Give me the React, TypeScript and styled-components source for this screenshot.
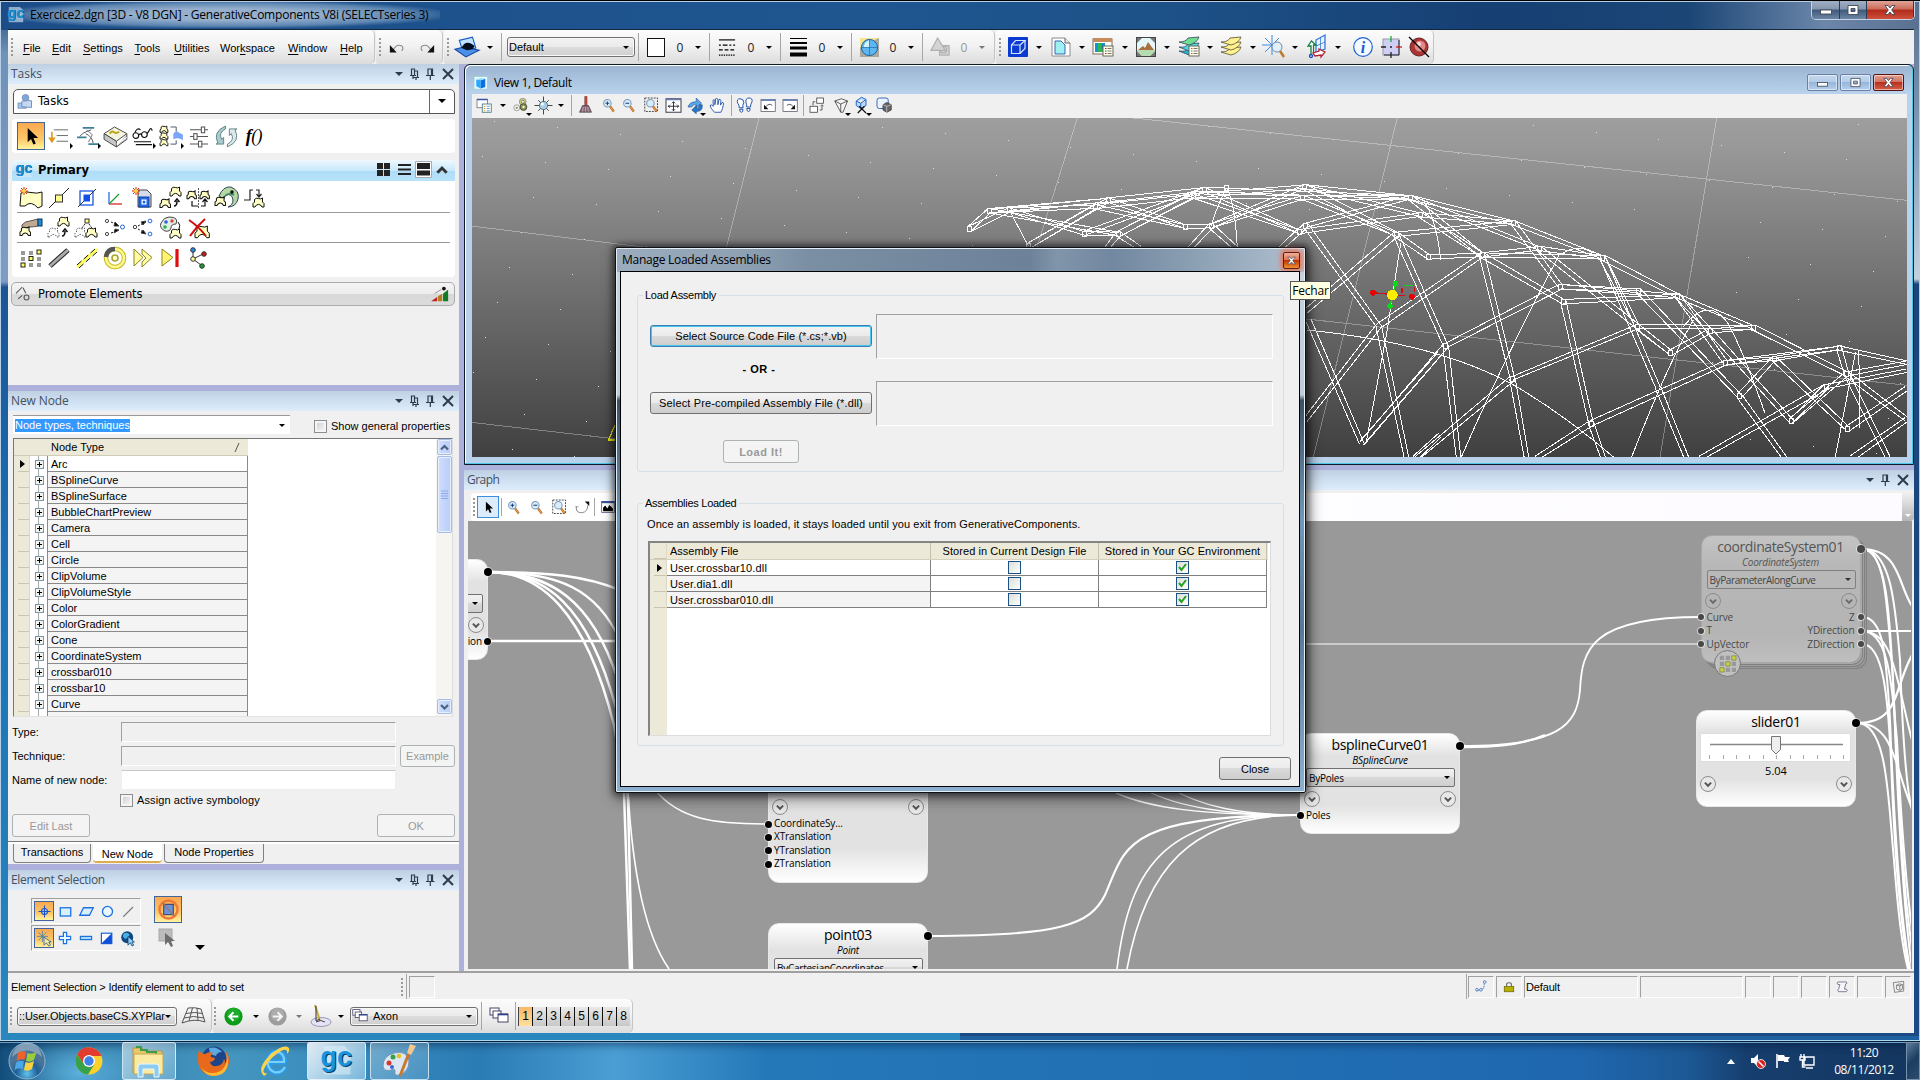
import React from "react";
import styled, { createGlobalStyle, css } from "styled-components";

const Global = createGlobalStyle`
  *{box-sizing:border-box}
  html,body{margin:0;padding:0;overflow:hidden;background:#1b4b84}
  body{font:11px "Liberation Sans",Arial,sans-serif;color:#000}
`;
const UI = `"Liberation Sans",Arial,sans-serif`;
const SEG = `"Open Sans","Noto Sans",sans-serif`;
const VER = `"DejaVu Sans",Verdana,sans-serif`;

/* ---------- icon drawings, each on a 20 x 20 grid ---------- */
const leaf = (x: number, y: number, s = 1, dash = false) => (
  <path
    transform={`translate(${x} ${y}) scale(${s})`}
    d="M0 9V5.500L1.500 4V1.500Q3-.5 5.500 .5Q7.500 1.500 9.500 0V4L11 5.500V9H9L7.500 7Q5.500 5.800 3.500 7L2 9Z"
    fill={dash ? "none" : "#ffffc4"}
    stroke={dash ? "#555" : "#111"}
    strokeWidth={1 / s}
    strokeDasharray={dash ? "1.5 1.2" : undefined}
  />
);
const star = (x: number, y: number) => (
  <g>
    <path d={`M${x - 4} ${y}h8M${x} ${y - 4}v8M${x - 3} ${y - 3}l6 6M${x + 3} ${y - 3}l-6 6`} stroke="#e02000" />
    <circle cx={x} cy={y} r="2" fill="#ffd040" />
  </g>
);
const lens = (sign: string) => (
  <g>
    <path d="M12 11l5 7" stroke="#b86a20" strokeWidth="3" />
    <path d="M12.500 11.500l4 6" stroke="#f3b15c" strokeWidth="1.200" />
    <circle cx="8.500" cy="7" r="5" fill="#d8ecfa" stroke="#7c9ab8" strokeWidth="1.400" />
    <path d={sign} stroke="#1c3c78" strokeWidth="1.400" />
  </g>
);
const sheet = (x: number, y: number) => (
  <g>
    <rect x={x} y={y} width="10" height="10" fill="#fffde8" stroke="#5c5c50" strokeWidth=".9" />
    <path d={`M${x + 4.5} ${y + 2.5}h4M${x + 4.5} ${y + 5}h4M${x + 4.5} ${y + 7.5}h4`} stroke="#555" strokeWidth=".8" />
    <path d={`M${x + 2} ${y + 2.5}h1.5M${x + 2} ${y + 7.5}h1.5`} stroke="#d02020" />
    <path d={`M${x + 2} ${y + 5}h1.5`} stroke="#2050d0" />
  </g>
);
const cascade = (
  <g fill="#fff" stroke="#446">
    <rect x="1" y="2" width="9" height="7" /><rect x="4" y="5" width="8" height="7" /><rect x="9" y="8" width="10" height="8" />
    <path d="M9 8.500h10" stroke="#2a3c8c" strokeWidth="1.600" />
  </g>
);
const ICONS: Record<string, React.ReactNode> = {
  gc: (
    <g fontFamily={UI} fontWeight="700">
      <path d="M1 0h14l4 4v15H1z" fill="#d7ecf8" opacity=".6" />
      <text x="-.4" y="14.200" fontSize="18" fill="#083c6e" textLength="21" lengthAdjust="spacingAndGlyphs">gc</text>
      <text x="-1" y="13.300" fontSize="18" fill="#1893dd" textLength="21" lengthAdjust="spacingAndGlyphs">gc</text>
    </g>
  ),
  undo: <g><path d="M5 13Q9 5.500 14.500 8Q18 10 15 14" stroke="#888" fill="none" strokeWidth="1.300" /><path d="M1 7v9h8z" fill="#111" /></g>,
  redo: <g><path d="M15 13Q11 5.500 5.500 8Q2 10 5 14" stroke="#888" fill="none" strokeWidth="1.300" /><path d="M19 7v9h-8z" fill="#111" /></g>,
  laptop: (
    <g><path d="M3 4L15 1L18 11L6 13Z" fill="#bfe3ff" stroke="#1a5cc8" /><path d="M-1 12L7 10L21 13L9 19Z" fill="#4a90e8" stroke="#1546a0" /><path d="M5 11Q8 4 14 7L17 9L15 12L10 13Z" fill="#041020" /></g>
  ),
  styles: <g stroke="#000" strokeWidth="1.200"><path d="M1 2h17" /><path d="M1 7.500h17" strokeDasharray="2 2 5 2" /><path d="M1 12.500h17" strokeDasharray="4 2" /><path d="M1 18h17" strokeDasharray="1.500 1" /></g>,
  globe: (
    <g><rect width="20" height="20" fill="#f6e490" /><path d="M0 10V20H20V0Z" fill="#a9a9a0" /><circle cx="10" cy="10" r="8.500" fill="#5db8f2" stroke="#1c5c9c" /><path d="M10 2Q4 4 4 10H10Z" fill="#d4f0ff" /><path d="M10 1.500v17M1.500 10h17" stroke="#2a6cb0" strokeWidth=".8" /></g>
  ),
  tri: <g fill="#d4d4d4" stroke="#b0b0b0" strokeWidth="1.300"><rect x="9" y="8" width="10" height="10" /><circle cx="13" cy="12" r="3.500" /><path d="M7 0l8 13H0z" /></g>,
  model: <g><rect width="20" height="20" rx="1" fill="#0b3ad2" /><path d="M3.500 8h8.500v8.500h-8.500zM3.500 8l4-4.500h9.500l-5 4.500M17 3.500v8l-5 5" fill="none" stroke="#d4e4ff" strokeWidth="1.200" /></g>,
  refs: <g><path d="M1 1h13l5 5v13H1z" fill="#fff" stroke="#8c8c8c" /><path d="M4 4h6l4 4v9H4z" fill="#9ff0f0" stroke="#3c64b0" /><path d="M14 1v5h5" fill="#e8e8e8" stroke="#666" /></g>,
  raster: <g><rect x="0" y="2" width="19" height="15" fill="#fff" stroke="#806c5c" /><path d="M0 1h19v4H0z" fill="#c88c5c" /><rect x="2" y="6" width="10" height="9" fill="#1690d8" /><path d="M5 6h3v6h4v3H5z" fill="#30b850" />{sheet(10, 9)}</g>,
  image: <g><rect x=".5" y=".5" width="19" height="19" fill="#777" stroke="#444" /><path d="M6 1h8l5 5v8l-5 5H6l-5-5V6z" fill="#e4f8fa" /><path d="M1 13h18v1l-5 5H6l-5-5z" fill="#b4dcb0" /><path d="M2 13l5-4 2 2 3-6 6 8z" fill="#a8703c" /></g>,
  layersg: <g stroke="#345" strokeWidth=".8"><path d="M0 14q7 1 9-2l11-1q-2 5-10 7z" fill="#20b8d8" /><path d="M0 10q7 1 9-3l11-1q-2 6-10 8z" fill="#50d8e8" /><path d="M0 5q7 0 9-4l11-1q-2 6-10 8z" fill="#70e090" />{sheet(10, 9)}</g>,
  layersy: <g stroke="#55502c" strokeWidth=".8" fill="#fff090"><path d="M0 15q7 0 9-4l11-1q-2 6-10 8z" /><path d="M0 10q7 0 9-4l11-1q-2 6-10 8z" /><path d="M0 5q7 0 9-4l11-1q-2 6-10 8z" /></g>,
  accusnap: <g><path d="M8-2v20M-2 8h20M1 1l13 13M15 1L1 15" stroke="#3c8ce8" strokeWidth="1" /><path d="M16 14l4 6" stroke="#c07828" strokeWidth="2.500" /><circle cx="13" cy="10" r="5" fill="#e0f0fc" stroke="#788ca0" /></g>,
  acs: <g fill="none" strokeWidth="1.300"><path d="M9 3L18-2V12L9 15Z" stroke="#3878d8" fill="#eaf4ff" /><path d="M13.500 1v12M9 9l9-4" stroke="#3878d8" strokeWidth=".8" /><path d="M4 17V9H1L4.500 4L9 8H6.500V16" stroke="#108040" fill="#fff" /><path d="M6 16l6-2v-2l6 3-4 5v-2l-6 1z" stroke="#b02030" fill="#fff" /><circle cx="4" cy="19" r="1.500" stroke="#1848c0" /></g>,
  info: <g><circle cx="10" cy="10" r="9.300" fill="#f4faff" stroke="#2060d0" strokeWidth="1.200" /><text x="10" y="15.500" fontSize="16" fontStyle="italic" fontWeight="700" fontFamily="Liberation Serif,serif" fill="#1858c8" textAnchor="middle">i</text></g>,
  aim: <g><rect x="2" y="2" width="16" height="16" fill="#cfcff4" stroke="#99a" /><path d="M3 18h15V3" stroke="#223" fill="none" /><path d="M10-1v6" stroke="#10b030" strokeWidth="1.300" /><path d="M15 10h6" stroke="#d01818" strokeWidth="1.300" /><path d="M0 10h5M10 15v6M9 10h2" stroke="#222" strokeWidth="1.300" /></g>,
  noball: <g><circle cx="10" cy="10" r="9" fill="#a83434" stroke="#702020" /><circle cx="11" cy="9" r="5.500" fill="#e08888" /><circle cx="10" cy="7" r="2" fill="#fbe0e0" /><path d="M0 0l20 20" stroke="#000" strokeWidth="1.300" /></g>,
  /* view toolbar */
  attrs: <g><rect x="0" y="2" width="14" height="11" fill="#fff" stroke="#667" /><path d="M0 2h14" stroke="#3a54a0" strokeWidth="2" /><rect x="7" y="8" width="12" height="11" fill="#fff" stroke="#367" /><path d="M9 11h2M9 14h2M9 17h2" stroke="#d8a020" strokeWidth="1.500" /><path d="M13 11h4M13 14h4M13 17h4" stroke="#38a" /></g>,
  display: <g><circle cx="5" cy="13" r="4" fill="#f4f4e0" stroke="#888" /><circle cx="13" cy="5" r="4.500" fill="#d8dc80" stroke="#777" /><circle cx="14" cy="12" r="4.500" fill="#889440" stroke="#333" /><circle cx="5" cy="13" r="1.500" fill="#889" /><circle cx="13" cy="5" r="2" fill="#fff" stroke="#554" /><circle cx="14" cy="12" r="1.600" fill="#eee" /></g>,
  bulb: <g><path d="M10-2v24M-2 10h24M3 3l14 14M17 3L3 17" stroke="#333" strokeWidth="1.200" /><circle cx="10" cy="10" r="5.500" fill="#a8d0e8" stroke="#456" /><circle cx="8.500" cy="8" r="2" fill="#fff" /></g>,
  brush: <g><path d="M9-2h3v12H9z" fill="#d05040" stroke="#602018" strokeWidth=".7" /><path d="M6 10h8l4 9H2z" fill="#8a6a78" stroke="#333" strokeWidth=".8" /><path d="M7 12l-1 6M10 12v6M13 12l1 6" stroke="#e0c8c0" strokeWidth=".8" /></g>,
  zin: lens("M6 7h5M8.500 4.500v5"),
  zout: lens("M6 7h5"),
  zwin: <g><rect x="1" y="0" width="17" height="18" fill="none" stroke="#111" strokeDasharray="2.500 1.500" />{lens("")}</g>,
  fit: <g><rect x="0" y="1" width="20" height="18" fill="#fff" stroke="#445" strokeWidth="1.400" /><path d="M0 2h20" stroke="#6a7cb0" strokeWidth="2" /><path d="M10 5v12M3 11h14M8 7l2-2 2 2M8 15l2 2 2-2M5 9l-2 2 2 2M15 9l2 2-2 2" stroke="#223" fill="none" strokeWidth="1.200" /></g>,
  rotate: <g fill="#58a8f0" stroke="#1c4c8c" strokeWidth=".8"><path d="M0 12Q2 5 11 5V0l7 7-7 6V9Q6 8 5 12z" /><path d="M19 9q1 9-8 9v3l-6-5 6-6v4q4 0 4-5z" fill="#2878c8" /></g>,
  hand: <path d="M6 19Q1 14 0 10Q2 8 4.500 11L4 3Q5 1.500 6.500 3V9L7.500 1Q9 0 10.500 1.500V9L12 2Q14 1 14.500 3.500L14 9.500L16 6Q18.500 6 18 8Q17 15 14.500 19Z" fill="#fff" stroke="#2050a8" strokeWidth="1.200" />,
  feet: <g fill="#fff" stroke="#2050a8" strokeWidth="1.300"><path d="M4 1q5 0 5 5q-2 4-1 7H3Q3 9 1 7Q-1 1 4 1zM3.500 15h4.500q0 4-2.200 4t-2.300-4z" /><path d="M16 0q5 0 4 5q-2 3-2 7h-5q0-4-1-6Q11 0 16 0zM13 14h4.500q0 4-2.200 4t-2.300-4z" /></g>,
  vprev: <g><rect x="0" y="2" width="19" height="16" fill="#fff" stroke="#556" /><path d="M0 3h19" stroke="#6a88c0" strokeWidth="2" /><path d="M6 12q5-6 9-2" stroke="#222" fill="none" /><path d="M4 9v6h6z" fill="#111" /></g>,
  vnext: <g><rect x="0" y="2" width="19" height="16" fill="#fff" stroke="#556" /><path d="M0 3h19" stroke="#6a88c0" strokeWidth="2" /><path d="M14 12q-5-6-9-2" stroke="#222" fill="none" /><path d="M16 9v6h-6z" fill="#111" /></g>,
  vcopy: <g><rect x="9" y="0" width="9" height="7" fill="#fff" stroke="#333" /><rect x="0" y="11" width="10" height="8" fill="#fff" stroke="#333" /><path d="M13 16h3V10M4 10V5h3M14 11l2-2 2 2" stroke="#333" fill="none" /></g>,
  persp: <g fill="#f4f4f4" stroke="#333"><path d="M1 4L10 1L18 4L12 19H9Z" /><path d="M1 4l8 4 9-4M9 8v11" fill="none" /></g>,
  clip: <g fill="none" strokeWidth="1.300"><path d="M3 4l7-5 6 3v8l-7 4-6-4zM3 4l6 3 7-5M9 7v7" stroke="#2460c8" fill="#bcdcfc" /><path d="M5 20l9-9M16 20l-9-9" stroke="#111" strokeWidth="1.600" /></g>,
  clipv: <g><rect x="0" y="0" width="15" height="14" rx="3" fill="#eaf2ff" stroke="#3868b8" strokeWidth="1.300" /><path d="M8 9l5-3 6 3v7l-6 3-5-3z" fill="#666" stroke="#333" /><path d="M8 9l5 2 6-2M13 11v8" stroke="#ccc" fill="none" /></g>,
  /* tasks */
  arrow: <path d="M6 1V16L9.500 12.500L12 18.500L14.500 17.300L12 11.500H17Z" fill="#000" />,
  sort: <g><path d="M4 3h15M7 9h12M7 15h12" stroke="#666" strokeWidth="1" /><path d="M2 5v8" stroke="#d88810" strokeWidth="1.500" /><path d="M-2 11h8l-4 6z" fill="#e09818" /></g>,
  dimen: <g><path d="M5 1h12M-1 11h10M11 18h11" stroke="#3c8098" strokeWidth="1.800" /><path d="M14 3Q4 6 2 10M8 7Q15 10 16 17" stroke="#555" fill="none" /><path d="M9 3l6 5-4 8" stroke="#777" fill="none" /></g>,
  book: <g stroke="#444"><path d="M-1 7L10 0L23 7L12 15Z" fill="#f4f4e0" /><path d="M-1 7V13L12 21V15ZM12 21L23 13V7" fill="#c8c8c8" /><path d="M5 7q3-4 5-1q2 1 5-1" stroke="#b8a818" strokeWidth="2" fill="none" /><path d="M12 18l11-7" fill="none" stroke="#fff" /></g>,
  glasses: <g fill="none" stroke="#111" strokeWidth="1.200"><circle cx="3" cy="9" r="3" /><circle cx="12" cy="8" r="3" /><path d="M6 8l3-1M2 6Q4 0 8 3M15 7L18 2Q20 1 20 4" /><path d="M1 15.500h18M3 18.500h17" /></g>,
  stack: <g>{leaf(-1, -1, 0.75)}{leaf(-1, 6, 0.75)}{leaf(-1, 13, 0.75)}<path d="M10 0h6v5M10 18h6v-4" stroke="#456" fill="none" /><path d="M13 13V7q3-4 6-1l4 2v6q-5-4-10-1z" fill="#7ca4f8" /></g>,
  sliders: <g fill="#fff" stroke="#555" strokeWidth="1.100"><path d="M1 3h19M1 10h19M1 18h19" /><rect x="13" y="0" width="3.500" height="6" /><rect x="5" y="7" width="3.500" height="6" /><rect x="10" y="15" width="3.500" height="6" /></g>,
  refresh: <g fill="#a8ccd0" stroke="#54787c" strokeWidth=".9"><path d="M9-1Q-5 5 1 17l-2 1h8v-7l-2 2Q1 6 9 2z" /><path d="M11 21Q25 15 19 3l2-1h-8v7l2-2Q19 14 11 18z" fill="#dce8ea" /></g>,
  /* primary */
  newf: <g><path d="M-1 18L0 5Q5 3 10 4.500Q16 6 21 4V18L17 20Q10 12 4 18Z" fill="#ffffc4" stroke="#111" />{star(3, 3)}</g>,
  point: <g><path d="M0 20L20 0" stroke="#222" /><rect x="6.500" y="7" width="7" height="7" fill="#ffff90" stroke="#333" /></g>,
  plane: <g><rect x="3" y="3" width="13" height="14" fill="#fff" stroke="#1858e0" strokeWidth="1.300" /><path d="M1 19L19 1" stroke="#234" /><rect x="6.500" y="6.500" width="6.500" height="7" fill="#1050e8" /></g>,
  csys: <g strokeWidth="1.200"><path d="M4 4v12" stroke="#1860e0" /><path d="M4 16h13" stroke="#d81818" /><path d="M4 16L14 6" stroke="#18a030" /></g>,
  newdoc: <g><path d="M5 2h9l4 4v13H5z" fill="#d4dcec" stroke="#444" /><rect x="6" y="9" width="10" height="10" fill="#2068e8" stroke="#1040a0" /><rect x="8.500" y="11.500" width="5" height="5" fill="#fff" /><circle cx="11" cy="14" r="1.500" fill="#2068e8" />{star(3, 3)}</g>,
  up1: <g>{leaf(9, -1)}{leaf(-1, 11, 0.95)}<path d="M13 18q3 0 3-5M13.500 14l2.500-3 2.500 3" fill="none" stroke="#111" strokeWidth="1.500" /></g>,
  up2: <g>{leaf(-2, 3, 0.85)}{leaf(11, 3, 0.85)}<path d="M9.500 0v20" stroke="#555" strokeDasharray="2 1" /><path d="M3 13v5h6M12 18h4v-5M13.500 14l2.500-3 2.500 3" fill="none" stroke="#111" strokeWidth="1.200" /></g>,
  spiral: <g><path d="M2 8Q6-2 14-1Q23 3 21 11Q19 19 11 19Q16 17 16 12Q15 5 9 7Q7 9 7 11Z" fill="#b4d8a4" stroke="#345" /><path d="M8 8q4-4 9-1" stroke="#486" fill="none" strokeWidth="2" /><circle cx="15" cy="4" r="1.800" fill="#111" />{leaf(-2, 9, 0.95)}</g>,
  down1: <g><path d="M-1 12h6V2h3M11 2h3v6M11.500 6l2.500 3 2.500-3" fill="none" stroke="#222" strokeWidth="1.200" />{leaf(8, 10, 1)}</g>,
  grab: <g><path d="M1 7q3-4 8-4l8-2v7q-5 1-8 1l-5 1q-4 0-3-3z" fill="#c0aa90" stroke="#555" /><rect x="17" y="1" width="4" height="7" fill="#1890e0" stroke="#135" />{leaf(-1, 9, 0.95)}</g>,
  dup: <g>{leaf(9, -1)}{leaf(-1, 10, 1, true)}<path d="M13 18q3 0 3-5M13.500 14l2.500-3 2.500 3" fill="none" stroke="#111" strokeWidth="1.500" /></g>,
  moved: <g><rect x="8" y="1" width="4" height="4" fill="#ffff80" stroke="#333" /><path d="M8 6l-4 5M12 6l3 4" stroke="#222" strokeDasharray="2 1" />{leaf(-2, 10, 1, true)}{leaf(9, 10)}</g>,
  link1: <g fill="#fff" stroke="#444"><circle cx="2" cy="3" r="1.600" /><circle cx="2" cy="16" r="1.600" /><circle cx="17.500" cy="9" r="2" stroke="#2868d8" /><path d="M6 4l7 3M6 15l6-2" strokeDasharray="2 1.500" stroke="#111" /><path d="M10 4l4 4-5 0zM9 15l5-3-4-1z" fill="#000" /></g>,
  link2: <g fill="#fff" stroke="#444"><circle cx="2" cy="9" r="1.700" /><circle cx="17" cy="3" r="1.900" stroke="#2868d8" /><circle cx="17" cy="16" r="1.900" stroke="#2868d8" /><path d="M5 8l8-4M5 11l7 4" strokeDasharray="2 1.500" stroke="#111" /><path d="M8 4l5-1-3 4zM8 15l5 1-3-4z" fill="#000" /></g>,
  palette: <g><path d="M8-1Q18-1 15 6Q10 6 10 10Q9 14 4 13Q-2 10 0 5Q3-1 8-1z" fill="#e0f0e4" stroke="#444" /><circle cx="5" cy="4" r="1.800" fill="#3060e0" /><circle cx="11" cy="3" r="1.700" fill="#e04040" /><circle cx="4" cy="9" r="1.800" fill="#30b040" /><path d="M17 4q3 3 1 7" fill="none" stroke="#111" />{leaf(9, 11)}</g>,
  del: <g>{leaf(6, 8, 1.3)}<path d="M0 2Q9 8 17 18M16 1Q8 8 1 18" stroke="#d00c0c" strokeWidth="2" fill="none" /></g>,
  grid9: <g fill="#999"><rect x="0" y="3" width="4" height="4" /><rect x="8" y="3" width="4" height="4" /><rect x="0" y="9" width="4" height="4" /><rect x="16" y="9" width="4" height="4" /><rect x="8" y="15" width="4" height="4" /><rect x="16" y="15" width="4" height="4" /><g fill="#ffff60" stroke="#222"><rect x="16" y="2" width="4" height="4" /><rect x="8" y="8.500" width="4" height="4" /><rect x="0" y="15" width="4" height="4" /></g></g>,
  line1: <g><path d="M1 18L19 2" stroke="#222" strokeWidth="5" /><path d="M1 18L19 2" stroke="#aaa" strokeWidth="3" /></g>,
  line2: <g><path d="M0 19L20 1" stroke="#ffff50" strokeWidth="3" /><path d="M0 17L18 1M2 20L20 4" stroke="#111" strokeDasharray="6 3" /></g>,
  rings: <g fill="none"><circle cx="10" cy="10" r="9" stroke="#c8bc20" strokeWidth="4.500" /><circle cx="10" cy="10" r="9" stroke="#fff890" strokeWidth="2.500" /><circle cx="10" cy="10" r="3" stroke="#a8a430" strokeWidth="1.600" fill="#ffffd0" /><path d="M1 9Q2 1 10 1" stroke="#555" strokeWidth="4.500" /></g>,
  play2: <g fill="#fffca0" stroke="#8c8420"><path d="M1 1v17l9-8.500z" /><path d="M9 1v5l4 4-4 4v5l10-9.500z" /></g>,
  playend: <g><path d="M1 1v17l11-8.500z" fill="#fff470" stroke="#8c8420" /><path d="M16 1v18" stroke="#e01010" strokeWidth="3.200" /></g>,
  tree: <g stroke="#333"><path d="M4 11L4 2M4 11l10-5M4 11l8 6" /><circle cx="4" cy="2" r="2.300" fill="#2888e0" /><circle cx="15" cy="6" r="2.300" fill="#d01818" /><circle cx="13" cy="18" r="2.300" fill="#18a030" /><circle cx="4" cy="11" r="2.300" fill="#ffff90" /></g>,
  promote: <g fill="none" stroke="#555" strokeWidth="1.500"><path d="M0 9L9 0M10 1l4 8M3 17l6-5" /><circle cx="15" cy="15" r="3.500" /></g>,
  ramp: <g><path d="M-1 18l7-5v5z" fill="#c02020" /><path d="M7 18v-6l5-3v9z" fill="#b08020" /><path d="M13 18V9l6-5v14z" fill="#107c28" /><circle cx="14" cy="3" r="2.200" fill="#111" /><path d="M3 9l8-5" stroke="#888" /></g>,
  person: <g><path d="M0 12h11v7H0z" fill="#a8c4ec" stroke="#6888b8" /><path d="M5 17V10q5-3 13-1v9z" fill="#c4d8f4" stroke="#5478b0" /><circle cx="10" cy="5" r="4.500" fill="#78a8e0" stroke="#88a" /></g>,
  chart: <g><rect x="1" y="2" width="18" height="16" fill="#fff" stroke="#446" /><path d="M1 3h18" stroke="#3a5498" strokeWidth="3" /><path d="M3 16v-5l3-3 3 4 3-5 5 5v4z" fill="#000" /></g>,
  orbit: <g><path d="M2 8q-2 9 7 9q8-1 8-10" fill="none" stroke="#888" strokeWidth="1.300" /><path d="M13 2h6v6z" fill="#111" /><path d="M0 9h5" stroke="#999" /></g>,
  /* element selection */
  selind: <g stroke="#2050c8" fill="none" strokeWidth="1.400"><circle cx="10" cy="10" r="4" fill="#9ce0f0" /><path d="M10 2v16M2 10h16" /></g>,
  selbox: <rect x="3" y="5" width="14" height="11" fill="#d8f0fc" stroke="#1c70e0" strokeWidth="1.700" />,
  selpar: <path d="M6 5h13l-5 10H1z" fill="#d8f0fc" stroke="#1c70e0" strokeWidth="1.700" />,
  selcir: <circle cx="10" cy="10" r="6.700" fill="#e8f8fc" stroke="#1c70e0" strokeWidth="1.700" />,
  sellin: <path d="M3 17L16 4" stroke="#777" strokeWidth="1.500" />,
  selnew: <g><path d="M8 1v14M1 8h14M3 3l10 10M13 3L3 13" stroke="#4080a8" /><path d="M10 9v10l3-3 3 4 2-1-2-4h3z" fill="#ffe89c" stroke="#2060a0" /></g>,
  seladd: <path d="M8 3h4v5h5v4h-5v5H8v-5H3V8h5z" fill="#e4f8ff" stroke="#1c70e0" strokeWidth="1.500" />,
  selsub: <rect x="3" y="8" width="14" height="4" fill="#a8dcfc" stroke="#1c70e0" strokeWidth="1.500" />,
  selinv: <g><rect x="3" y="4" width="13" height="13" fill="#fff" stroke="#1c60d8" strokeWidth="1.500" /><path d="M16 4V17H3Z" fill="#1050d8" /></g>,
  selall: <g><circle cx="9" cy="9" r="7.500" fill="#104880" /><path d="M5 4q5-2 7 2q-2 5-6 5Q2 8 5 4z" fill="#48b0e0" /><path d="M10 8v11l3-3 2 4 2-1-2-4h3z" fill="#8cd0f8" stroke="#103c70" /></g>,
  disable: <g><rect x="5" y="4.500" width="10" height="11" fill="#6c94d8" stroke="#334" /><circle cx="10" cy="10" r="9.500" fill="none" stroke="#f07838" strokeWidth="2.600" /><path d="M4 3l12 14" stroke="#9c7080" strokeWidth="1.500" /></g>,
  grayptr: <g><rect x="2" y="1" width="13" height="12" fill="#bcbcbc" stroke="#a8a8a8" /><path d="M8 5v12l3-3 3 5 2-1-2-5h4z" fill="#6c6c6c" /></g>,
  mesh: <path d="M5 2Q12 1 18 3L22 16Q12 12 -1 17ZM3 7.500q8-2 17 0M1 12q9-3 20 0M9.500 2L6 15M14 2l1 12" fill="none" stroke="#555" />,
  back: <g><circle cx="10" cy="10" r="9.600" fill="#0c9c18" /><circle cx="10" cy="8" r="7" fill="#28b838" opacity=".6" /><path d="M15 10H6M10 5.500L5.500 10L10 14.500" stroke="#fff" fill="none" strokeWidth="2" /></g>,
  fwd: <g><circle cx="10" cy="10" r="9.600" fill="#9c9c9c" /><circle cx="10" cy="8" r="7" fill="#b4b4b4" opacity=".7" /><path d="M5 10h9M10 5.500l4.500 4.500-4.500 4.500" stroke="#f4f4f4" fill="none" strokeWidth="2" /></g>,
  compass: <g><ellipse cx="11" cy="16" rx="10" ry="4.500" fill="#e4e4f4" stroke="#99b" /><path d="M5-1l5 16" stroke="#c8ac40" strokeWidth="2" /><path d="M6 0v15l4-2" stroke="#333" /><path d="M6 16q5-3 9 0" stroke="#446" fill="none" /></g>,
  cascade,
  path: <g fill="#fff" stroke="#3868c0" strokeWidth="1.300"><path d="M3 15q5 2 7 0Q15 13 14 5" fill="none" strokeDasharray="3 1" /><circle cx="3" cy="15" r="2" /><circle cx="9" cy="15" r="2" /><circle cx="15" cy="3" r="2" /></g>,
  lock: <g><path d="M6 9V6q0-3 4-3t4 3v3" fill="none" stroke="#666" strokeWidth="1.800" /><rect x="2" y="9" width="16" height="9" fill="#b8b000" stroke="#5c5800" /></g>,
  scroll: <path d="M3 3h13q2 3-1 3l-2 8h3q3 3 0 4H4q-3-3 0-4l2-7H3q-3-2 0-4z" fill="#f4f4fa" stroke="#777488" strokeWidth="1.400" />,
  cube: <g fill="none" stroke="#777" strokeWidth="1.300"><path d="M2 4L18 2V17L4 19Z" /><path d="M7 8l4-2 5 1v7l-4 2-5-2zM7 8l5 1v6M12 9l4-2" /></g>,
  cubeb: <g><path d="M0 2h18v17H0z" fill="#eaf8ff" stroke="#9cc" /><path d="M3 6l6 1v11l-6-3z" fill="#28a8ff" /><path d="M9 7l6-2v11l-6 2z" fill="#0c70e0" /><path d="M3 6l6-2 6 1-6 2z" fill="#90dcff" /></g>,
};

const Svg = styled.svg`display:block;flex:none;overflow:visible`;
const Ico = ({ n, s = 19 }: { n: string; s?: number }) => (
  <Svg width={s} height={s} viewBox="0 0 20 20" fill="none">{ICONS[n]}</Svg>
);

/* ---------- shared small parts ---------- */
const Caret = styled.i<{ $c?: string; $s?: number }>`
  display:block;flex:none;width:0;height:0;border-style:solid;border-color:${p => p.$c || "#000"} transparent transparent;
  border-width:${p => p.$s || 4}px ${p => p.$s || 4}px 0;
`;
const Slot = styled.div<{ $w: number; $on?: "orange" | "blue"; $h?: number }>`
  width:${p => p.$w}px;height:${p => (p.$h ? p.$h + "px" : "100%")};flex:none;display:flex;align-items:center;justify-content:center;position:relative;
  ${p => p.$on === "orange" && css`border:1px solid #41649c;background:linear-gradient(#f9a850,#fdc766 60%,#fff3a0);`}
  ${p => p.$on === "blue" && css`border:1px solid #3c8ee0;background:#dcecfb;`}
`;
const Corner = styled.i`position:absolute;right:0;bottom:1px;border:solid transparent;border-width:3px 0 3px 3px;border-left-color:#000`;
const CornerDown = styled.i`position:absolute;right:0;bottom:1px;border:solid transparent;border-width:3px 3px 0;border-top-color:#000`;
const Grip = styled.i<{ $m?: string }>`
  display:block;width:2px;height:18px;flex:none;margin:${p => p.$m || "0"};
  background:repeating-linear-gradient(#999 0 2px,transparent 2px 4px);
`;
const Sep = styled.i<{ $h?: number; $m?: string }>`display:block;flex:none;width:1px;height:${p => p.$h || 28}px;background:#a6a6a6;margin:${p => p.$m || 0}`;
const Text = styled.span<{ $ls?: number; $f?: string; $s?: number; $c?: string; $b?: boolean }>`
  white-space:nowrap;font-family:${p => p.$f || UI};font-size:${p => p.$s || 11}px;letter-spacing:${p => p.$ls || 0}px;
  color:${p => p.$c || "#000"};font-weight:${p => (p.$b ? 700 : 400)};
`;

/* ---------- main window ---------- */
const Desktop = styled.div`width:1920px;height:1080px;position:relative;overflow:hidden;display:flex;flex-direction:column`;
const Frame = styled.div`
  height:1041px;flex:none;padding:0 6px 8px 8px;display:flex;flex-direction:column;border-top:1px solid #000;
  background:linear-gradient(90deg,#1c4d88 0,#1f5690 45%,#1d5288 60%,#163f73 78%,#1b4676 88%,#6c86aa 95%,#5a7090 100%) top/100% 29px no-repeat,
   linear-gradient(#1b3f74 0,#6f92b8 5%,#7f9dc4 27%,#1c5594 27.500%,#1b71b5 55%,#2a87bd 100%) left/50% 100% no-repeat,
   linear-gradient(#5a7090 0,#8ca4bc 15%,#c4d0de 26.500%,#1c467a 27%,#1c4a84 100%) right/50% 1030px no-repeat,#1f60a0;
  box-shadow:inset 1px 1px 0 #b8cfe8,inset -1px -1px 0 #a8d8f0;
`;
const TitleBar = styled.div`height:28px;flex:none;display:flex;align-items:flex-start;justify-content:space-between`;
const TitleLeft = styled.div`display:flex;align-items:center;gap:6px;height:27px;padding-right:12px;
  background:radial-gradient(ellipse at center,rgba(190,208,228,.75) 30%,rgba(160,190,218,.5) 60%,transparent 76%)`;
const WinBtns = styled.div`display:flex;height:19px;border:1px solid #c4d4e6;border-top:0;border-radius:0 0 5px 5px;overflow:hidden;margin-right:-1px`;
const WinBtn = styled.div<{ $w: number; $red?: boolean }>`
  width:${p => p.$w}px;display:flex;align-items:center;justify-content:center;border-right:1px solid #263c58;
  background:${p => (p.$red ? "linear-gradient(#e0a498 0,#cc6a58 45%,#b02a18 50%,#d0503c)" : "linear-gradient(#a0b0c4 0,#8496ae 45%,#41587a 50%,#6c86a4)")};
`;
const Client = styled.div`flex:1;display:flex;flex-direction:column;background:#f0f0f0;border-top:1px solid #12283c;min-height:0`;
const Bar = styled.div<{ $h: number }>`height:${p => p.$h}px;flex:none;display:flex`;
const Band = styled.div<{ $w: number }>`
  width:${p => p.$w}px;height:100%;display:flex;align-items:center;flex:none;background:linear-gradient(#fcfcfc,#f2f2f2 45%,#dcdcdc);
  border-right:1px solid #c4c4c4;border-radius:2px 5px 5px 2px;margin-right:1px;
`;
const MenuItem = styled.span<{ $w: number }>`width:${p => p.$w}px;margin-right:14px;white-space:nowrap;font:11px ${UI};padding-top:1px;u{text-underline-offset:2px}`;
const Select = styled.div<{ $w: number; $h?: number }>`
  width:${p => p.$w}px;height:${p => p.$h || 19}px;flex:none;border:1px solid #707070;border-radius:3px;display:flex;align-items:center;justify-content:space-between;
  padding:0 5px 0 1px;background:linear-gradient(#f2f2f2,#ebebeb 48%,#dcdcdc 50%,#cfcfcf);overflow:hidden;box-shadow:inset 0 0 0 1px #f8f8f8;
`;
const Swatch = styled.div`width:18px;height:19px;border:1.500px solid #111;background:#fff`;

const Body = styled.div`flex:1;display:flex;min-height:0;background:#adb0db`;
const Left = styled.div`width:451px;flex:none;display:flex;flex-direction:column;gap:6px`;
const Pane = styled.div<{ $h: number }>`height:${p => p.$h}px;flex:none;background:#f0f0f0;display:flex;flex-direction:column`;
const PaneHead = styled.div`
  height:20px;flex:none;display:flex;align-items:center;justify-content:space-between;padding:0 5px 1px 3px;background:linear-gradient(#bfd0e2,#cddff0 50%,#deedfc);
`;
const HeadIcons = styled.div`display:flex;align-items:center;gap:7px;height:100%`;
const Pin = ({ d }: { d?: boolean }) => (
  <Svg width="9" height="12" viewBox="0 0 9 12" fill="none" stroke="#2f3b48" strokeWidth="1.2">
    {d ? <path d="M1.500 7V1H4.500V7M0 7.500h6M3 7.500V11M4.500 3H7.500V9M2.500 9.500H9M6 9.500V12" /> : <path d="M2 7V1h4.500v6M0 7.500h8.500M4.300 7.500V12M5.500 1v6" />}
  </Svg>
);
const Cross = () => (
  <Svg width="12" height="12" viewBox="0 0 12 12" stroke="#2f3b48" strokeWidth="2"><path d="M1 1l10 10M11 1L1 11" /></Svg>
);
const Head = ({ t, ls = 0, one }: { t: string; ls?: number; one?: boolean }) => (
  <PaneHead><Text $f={SEG} $s={12} $c="#45505e" $ls={ls}>{t}</Text><HeadIcons><Caret $c="#2f3b48" />{!one && <Pin d />}<Pin /><Cross /></HeadIcons></PaneHead>
);
const TaskCombo = styled.div`
  height:25px;margin:5px 4px 0 5px;border:1px solid #555;border-radius:5px 5px 0 0;background:#fff;display:flex;align-items:center;padding:0 0 1px 4px;gap:5px;
`;
const ComboBtn = styled.div`width:25px;height:24px;border-left:1px solid #666;margin-left:auto;display:flex;align-items:center;justify-content:center`;
const WhiteRow = styled.div`height:34px;margin:5px 4px 0 4px;background:#fff;border-radius:4px;display:flex;align-items:center;padding-left:5px;flex:none;gap:.8px`;
const Primary = styled.div`height:21px;margin:7px 4px 0;flex:none;background:linear-gradient(#eef8ff,#c8e8fb 50%,#aedcf8 51%,#b8e2fa);border-radius:4px 4px 0 0;display:flex;align-items:center;padding:0 7px 2px 4px;gap:6px`;
const PrimaryTools = styled.div`margin-left:auto;display:flex;align-items:center;gap:4px`;
const Tools = styled.div`margin:0 4px;background:#fff;border-radius:0 0 4px 4px;padding:2px 5px 0;height:96px;flex:none`;
const ToolRow = styled.div`height:30px;display:flex;align-items:center;border-bottom:1px solid #999;&:last-child{border:0}`;
const Promote = styled.div`
  height:24px;margin:5px 4px 0 3px;flex:none;border:1.500px solid #ababab;border-radius:5px;background:linear-gradient(#f4f4f4,#ececec 50%,#d8d8d8 52%,#dcdcdc);
  display:flex;align-items:center;padding:0 5px 0 4px;gap:8px;
`;
const Push = styled.div`margin-left:auto`;

const FilterRow = styled.div`height:27px;flex:none;display:flex;align-items:center;padding:0 0 0 5px`;
const FilterBox = styled.div`width:277px;height:19px;background:#fff;border-top:1px solid #999;display:flex;align-items:center;justify-content:space-between;padding:0 5px 0 2px`;
const Marked = styled.span`background:#3399ff;color:#fff;height:13px;line-height:13px;white-space:nowrap`;
const Check = styled.span`width:13px;height:13px;flex:none;border:1px solid #8c8e90;background:linear-gradient(135deg,#c8ccd0,#fafafa);box-shadow:inset 0 0 0 2px #f4f4f4`;
const TreeBox = styled.div`height:279px;margin:0 6px 0 5px;flex:none;border:1px solid #777;border-right-color:#ddd;border-bottom-color:#e4e4e4;background:#fff;display:flex;overflow:hidden`;
const TreeRows = styled.div`width:234px;display:flex;flex-direction:column`;
const TreeHead = styled.div`height:17px;background:#ece9d8;border-bottom:1px solid #d0ccb8;flex:none;display:flex;align-items:center;padding-left:37px;justify-content:space-between;padding-right:7px`;
const TreeRow = styled.div`height:16px;flex:none;display:flex`;
const RowHead = styled.div<{ $w?: number }>`
  width:${p => p.$w || 16}px;background:#ece9d8;border-right:1px solid #ddd8c4;display:flex;align-items:center;justify-content:center;flex:none;
  box-shadow:inset 4px 0 0 #ece9d8,inset 0 -1px 0 #c9c5b2;
`;
const RightTri = styled.i`border:solid transparent;border-width:4px 0 4px 5px;border-left-color:#000;margin-left:2px`;
const PlusCell = styled.div`width:17px;flex:none;display:flex;align-items:center;justify-content:center;padding-left:1px;background:linear-gradient(90deg,transparent 8px,#aaa 8px 9px,transparent 9px)`;
const Plus = styled.span`width:9px;height:9px;border:1px solid #7f93ad;background:linear-gradient(#000,#000) center/5px 1px no-repeat,linear-gradient(#000,#000) center/1px 5px no-repeat,#f4f4f0`;
const NameCell = styled.div<{ $hot?: boolean }>`flex:1;border:solid #8a8a8a;border-width:0 1px 1px;background:${p => (p.$hot ? "#fff" : "#f4f4f4")};padding-left:3px;line-height:17px;height:16px;white-space:nowrap`;
const Scroll = styled.div`width:16px;margin-left:auto;background:#f6f5f2;display:flex;flex-direction:column;align-items:center;justify-content:space-between;flex:none;padding-bottom:1px`;
const ScBtn = styled.div<{ $h: number }>`width:15px;height:${p => p.$h}px;border:1px solid #a4bce8;border-radius:2px;background:linear-gradient(90deg,#d0dffc,#b8ccf8);display:flex;align-items:center;justify-content:center;box-shadow:inset 0 0 0 1px #e8f0ff;flex:none;margin-bottom:1px`;
const Chev = ({ up, c = "#4d6185", w = 9 }: { up?: boolean; c?: string; w?: number }) => (
  <Svg width={w} height={w} viewBox="0 0 9 9" fill="none" stroke={c} strokeWidth="2.2"><path d={up ? "M1 6.500L4.500 3L8 6.500" : "M1 3L4.500 6.500L8 3"} /></Svg>
);
const Form = styled.div`display:grid;grid-template-columns:109px 275px 4px 54px;row-gap:4px;padding:5px 0 0 4px;align-items:center;height:73px;grid-template-rows:20px 20px 20px;flex:none`;
const Field = styled.div<{ $white?: boolean }>`height:20px;border:1px solid;border-color:#a0a0a0 #fff #fff #a0a0a0;${p => p.$white && css`background:#fff;border-color:#c8c8c8 #eee #eee #eee;`}`;
const Button = styled.div<{ $w: number; $h?: number; $off?: boolean; $focus?: boolean; $b?: boolean; $ls?: number }>`
  width:${p => p.$w}px;height:${p => p.$h || 22}px;flex:none;border:1px solid ${p => (p.$off ? "#adb2b5" : "#707070")};border-radius:3px;display:flex;align-items:center;justify-content:center;
  font:${p => (p.$b ? "bold " : "")}11px ${UI};letter-spacing:${p => p.$ls || 0}px;white-space:nowrap;color:${p => (p.$off ? "#999" : "#000")};
  background:${p => (p.$off ? "#f4f4f4" : "linear-gradient(#f3f3f3,#ebebeb 48%,#dadada 50%,#cdcdcd)")};
  ${p => p.$focus && css`border-color:#3c7fb1;box-shadow:inset 0 0 0 1px #45c4ef;`}
`;
const Row = styled.div<{ $p?: string; $g?: number; $h?: number; $j?: string }>`display:flex;align-items:center;padding:${p => p.$p || 0};gap:${p => p.$g || 0}px;height:${p => (p.$h ? p.$h + "px" : "auto")};justify-content:${p => p.$j || "flex-start"};flex:none`;
const Tabs = styled.div`height:23px;flex:none;display:flex;align-items:flex-start;padding-left:5px;gap:2px;border-top:1px solid #777;box-shadow:inset 0 2px 0 #fff;margin-top:auto`;
const Tab = styled.div<{ $w: number; $on?: boolean }>`
  width:${p => p.$w}px;height:${p => (p.$on ? 21 : 19)}px;margin-top:${p => (p.$on ? 0 : 2)}px;border:1px solid #808080;border-top:0;border-radius:0 0 4px 4px;text-align:center;line-height:${p => (p.$on ? 25 : 17)}px;white-space:nowrap;
  ${p => p.$on && css`background:#fff;border:0;border-bottom:2px solid #dcae50;`}
`;
const Boxes = styled.div`width:110px;height:26px;border:1px solid;border-color:#a0a0a0 #fff #fff #a0a0a0;display:flex;align-items:center;padding-left:2px;gap:1px`;

const Right = styled.div`flex:1;display:flex;flex-direction:column;margin-left:5px;min-width:0;gap:5px`;
const ViewWin = styled.div`
  height:401px;flex:none;padding:0 6px 7px 7px;display:flex;flex-direction:column;border:1px solid #0c1c28;border-radius:6px 6px 0 0;
  background:linear-gradient(#9ab4d2,#b9d1ea 28px);box-shadow:inset 0 -1px 0 #4cc8e8,inset -1px 0 0 #4cc8e8,inset 1px 1px 0 #fff;
`;
const ViewTitle = styled.div`height:29px;flex:none;display:flex;align-items:center;gap:5px;padding:5px 3px 0 2px`;
const MdiBtn = styled.div<{ $red?: boolean }>`
  width:31px;height:17px;border:1px solid ${p => (p.$red ? "#581414" : "#6a80a4")};border-radius:2px;display:flex;align-items:center;justify-content:center;
  background:${p => (p.$red ? "linear-gradient(#e4a090,#d07060 48%,#b83020 50%,#d86048)" : "linear-gradient(#c4d8ee,#b4cce8 48%,#98b6da 50%,#b4cfec)")};box-shadow:inset 0 0 0 1px rgba(255,255,255,.5);
`;
const ViewTools = styled.div`height:24px;flex:none;background:#f0f0f0;display:flex;align-items:center;padding-bottom:1px`;
const Canvas = styled.div`flex:1;min-height:0;background:linear-gradient(#9e9e9e,#999 8%,#404040 100%);overflow:hidden`;

const GraphPane = styled.div`flex:1;min-height:0;background:#f0f0f0;display:flex;flex-direction:column`;
const GraphTools = styled.div`height:28px;margin:3px 0 0 7px;flex:none;display:flex;align-items:center;background:linear-gradient(90deg,#fff,#fdfbff);border-radius:4px`;
const GraphEnd = styled.div`margin-left:auto;width:12px;height:100%;background:linear-gradient(#f0f0f0,#b4b4b4);border-radius:0 0 4px 0;display:flex;align-items:flex-end;justify-content:center;padding-bottom:4px`;
const GraphArea = styled.div`height:448px;margin:0 2px 0 4px;flex:none;background:#999;position:relative;overflow:hidden`;
const Wires = styled.svg`position:absolute;left:0;top:0`;
const NodeBox = styled.div<{ $x: number; $y: number; $h: number; $dim?: boolean }>`
  position:absolute;left:${p => p.$x - 468}px;top:${p => p.$y - 521}px;width:160px;height:${p => p.$h}px;border-radius:11px;border:1px solid #e8e8e8;
  background:linear-gradient(#fff,#e2e2e2 22%,#e2e2e2 72%,#fff);
  ${p => p.$dim && css`background:linear-gradient(#c4c4c4,#b8b8b8 22%,#b4b4b4 75%,#bebebe);border-color:#a8a8a8;box-shadow:2px 2px 0 -1px #a8a8a8,2px 2px 0 #808080,4px 4px 0 -1px #a0a0a0,4px 4px 0 #808080,6px 6px 0 -1px #999,6px 6px 0 #828282;`}
`;
const NodeTitle = styled.div<{ $dim?: boolean }>`text-align:center;font:14px/17px ${SEG};letter-spacing:${p => (p.$dim ? -0.4 : -0.3)}px;padding-top:2px;color:${p => (p.$dim ? "#555" : "#000")}`;
const NodeKind = styled.div<{ $dim?: boolean }>`text-align:center;font:italic 10px/13px ${SEG};letter-spacing:-.2px;margin-top:1px;color:${p => (p.$dim ? "#555" : "#000")}`;
const NodeSelect = styled.div<{ $dim?: boolean }>`
  margin:1px 4px 0 5px;height:19px;border:1px solid ${p => (p.$dim ? "#808080" : "#707070")};border-radius:2px;display:flex;align-items:center;justify-content:space-between;padding:0 4px 0 2px;font:10px ${SEG};letter-spacing:${p => (p.$dim ? -0.4 : -0.25)}px;color:${p => (p.$dim ? "#444" : "#000")};white-space:nowrap;
  background:${p => (p.$dim ? "#b8b8b8" : "linear-gradient(#f2f2f2,#e8e8e8 48%,#d8d8d8 50%,#cfcfcf)")};
`;
const ChevRow = styled.div<{ $m?: number }>`display:flex;justify-content:space-between;padding:0 3px;margin-top:${p => p.$m ?? 4}px`;
const Round = styled.span<{ $dim?: boolean }>`width:16px;height:16px;border:1px solid #8c8c8c;border-radius:50%;display:flex;align-items:center;justify-content:center;background:${p => (p.$dim ? "transparent" : "#e8e8e8")}`;
const Ports = styled.div<{ $dim?: boolean }>`display:flex;justify-content:space-between;padding:2px 5px 0 5px;font:10px/13.400px ${SEG};color:${p => (p.$dim ? "#484848" : "#000")};letter-spacing:-.1px;div+div{text-align:right}`;
const Dot = styled.i<{ $x: number; $y: number; $r?: number; $dim?: boolean }>`
  position:absolute;left:${p => p.$x - 468 - (p.$r || 3.5)}px;top:${p => p.$y - 521 - (p.$r || 3.5)}px;width:${p => 2 * (p.$r || 3.5)}px;height:${p => 2 * (p.$r || 3.5)}px;border-radius:50%;background:${p => (p.$dim ? "#484848" : "#000")};box-shadow:0 0 0 1px rgba(255,255,255,.55);
`;
const Badge = styled.div`position:absolute;left:1246px;top:129px;width:27px;height:27px;border-radius:50%;border:1.500px solid #777;background:#c0c0c0;display:flex;align-items:center;justify-content:center`;
const SliderBox = styled.div`margin:3px 4px 0 3px;height:29px;background:#fff;border:1px solid #ddd`;
const Value = styled.div`text-align:center;font:11px/16px ${SEG};margin-top:1px`;
const Down = () => <Round><Chev c="#555" w={8} /></Round>;
const DimDown = () => <Round $dim><Chev c="#6c6c6c" w={8} /></Round>;

const Status = styled.div`height:28px;flex:none;border-top:2px solid #a0a0a0;display:flex;align-items:center;padding:1px 1px 0 3px`;
const Cell = styled.div<{ $w: number; $left?: boolean }>`width:${p => p.$w}px;height:22px;border:1px solid;border-color:#a0a0a0 #fff #fff #a0a0a0;margin-right:2px;display:flex;align-items:center;justify-content:${p => (p.$left ? "flex-start" : "center")};padding-left:${p => (p.$left ? 1 : 0)}px;flex:none`;
const Num = styled.div<{ $on?: boolean }>`
  width:14px;height:19px;flex:none;border-left:1.500px solid #111;background:linear-gradient(#e8e8e8,#c8c8c8);display:flex;align-items:center;justify-content:center;font:12px ${UI};
  ${p => p.$on && css`background:linear-gradient(#f8b868,#ffe09c);border-left-color:#444;`}
`;

/* ---------- dialog ---------- */
const Dialog = styled.div`
  position:absolute;left:615px;top:247px;width:691px;height:546px;border:1px solid #0c1218;display:flex;flex-direction:column;padding:0 5px 5px 4px;border-radius:2px;
  background:linear-gradient(90deg,#9aacbe 0,#8fa2b4 18%,#7a8ea4 28%,#6d8298 60%,#8094aa 64%,#7288a0 72%,#8ca0b4 84%,#b0c0d0 100%) top/100% 24px no-repeat,linear-gradient(#c6d4e0,#c0ccd8 27%,#3c5064 28%,#7098b8 50%,#587898 70%,#8cb0d0);
  box-shadow:inset 0 0 0 1px #e4eef6,0 0 6px 2px rgba(0,0,0,.5),2px 4px 14px 2px rgba(0,0,0,.45);
`;
const DTitle = styled.div`height:23px;flex:none;display:flex;align-items:center;justify-content:space-between;padding:0 0 0 2px`;
const DClose = styled.div`width:17px;height:17px;border:1px solid #5a2018;border-radius:2px;background:linear-gradient(#f0b098,#dc7050 48%,#c03808 50%,#f09030);box-shadow:0 0 5px 2px #f07050;display:flex;align-items:center;justify-content:center;margin-top:2px`;
const DBody = styled.div`flex:1;border:1px solid #000;background:#f0f0f0;padding:16px 8px 0 16px;display:flex;flex-direction:column;min-height:0`;
const Group = styled.fieldset<{ $h: number; $mb: number }>`
  margin:0 7px ${p => p.$mb}px 0;padding:0;border:1px solid #d5dfe5;border-radius:3px;height:${p => p.$h}px;flex:none;min-width:0;
  legend{margin-left:5px;padding:0 3px 0 2px;font:11px/14px ${UI};height:14px;letter-spacing:-.27px}
`;
const Pick = styled.div`display:flex;align-items:center;gap:4px;padding-left:12px;> :first-child{margin-bottom:2px}`;
const Well = styled.div`width:397px;height:45px;border:1px solid;border-color:#a0a0a0 #fff #fff #a0a0a0`;
const Or = styled.div`width:222px;margin-left:12px;height:22px;line-height:21px;text-align:center;font-weight:700;padding-right:4px;letter-spacing:.5px`;
const Grid = styled.div`margin:9px 0 0 10px;width:623px;height:195px;border:1px solid #777;border-width:2px 1px 1px 2px;border-color:#848484 #ddd #ddd #848484;background:#fff;display:flex;flex-direction:column;box-shadow:inset 17px 0 0 #ece9d8`;
const GRow = styled.div<{ $head?: boolean }>`height:${p => (p.$head ? 17 : 16)}px;flex:none;display:flex;width:618px;${p => p.$head && css`background:#ece9d8;border-bottom:1px solid #d4d0bc;`}`;
const GCell = styled.div<{ $w: number; $alt?: boolean; $head?: boolean; $c?: boolean; $ls?: number }>`
  width:${p => p.$w}px;flex:none;display:flex;align-items:center;padding-left:3px;white-space:nowrap;letter-spacing:${p => p.$ls || 0}px;
  ${p => (p.$head ? css`border-right:1px solid #c4c0ae;` : css`border-right:1px solid #808080;border-bottom:1px solid #808080;`)}
  ${p => p.$alt && css`background:#f4f4f4;`}${p => p.$c && css`justify-content:center;padding:0;`}
`;
const GCheck = styled.span`width:13px;height:13px;border:1px solid #1c5180;background:linear-gradient(135deg,#dcdcd7,#fff);display:flex;align-items:center;justify-content:center`;
const Tip = styled.div`position:absolute;left:1290px;top:281px;width:41px;height:19px;border:1px solid #555;background:#ffffe1;font:12px/18px ${SEG};letter-spacing:-.2px;text-align:center;white-space:nowrap`;

/* ---------- taskbar ---------- */
const Taskbar = styled.div`
  flex:1;display:flex;align-items:center;border-top:1px solid #0c2036;box-shadow:inset 0 1px 0 #6ca0cc,inset 0 8px 8px -5px rgba(0,20,50,.5);
  background:radial-gradient(ellipse 70px 40px at 80px 30px,#5cb0dc,transparent),linear-gradient(90deg,#15507e 0,#3684b0 6%,#4496c0 12%,#2a7cb4 25%,#4a9ed4 32%,#2478b8 40%,#2170b4 60%,#1f68b0 82%,#1c5894 88%,#163e6e 91%,#14365f 100%);
`;
const TaskBtn = styled.div<{ $w: number; $on?: number }>`
  width:${p => p.$w}px;height:38px;display:flex;align-items:center;justify-content:center;flex:none;
  ${p => !!p.$on && css`border:1px solid rgba(230,245,255,.75);border-radius:3px;background:linear-gradient(135deg,rgba(255,255,255,${p.$on}),rgba(180,225,250,${p.$on * 0.6}));`}
`;
const Tray = styled.div`margin-left:auto;display:flex;align-items:center;height:100%`;
const Clock = styled.div`width:84px;text-align:center;font:12px/17px ${SEG};color:#fff;letter-spacing:-.4px;margin-left:2px`;
const ShowDesk = styled.div`width:14px;height:100%;border:1px solid #7890ac;background:linear-gradient(135deg,#5c7c9c,#1c3c60 50%,#2c4c70)`;

/* ---------- wireframe dome: coordinates are thirds of a pixel ---------- */
type P = [number, number];
const V: Record<string, P> = {
  a1: [88, 327], a2: [148, 272], a3: [208, 270], a4: [265, 378], a5: [432, 340], a6: [465, 260], a7: [505, 240], a8: [535, 342], a9: [737, 320],
  a10: [760, 228], a11: [792, 208], a12: [860, 203], a13: [813, 318], a15: [1092, 200], a16: [1088, 232], a17: [1078, 335], a18: [1097, 316],
  a19: [1410, 232], a20: [1440, 284], a21: [1368, 343], a22: [1466, 411], b1: [1720, 308], b2: [1797, 385], b3: [1626, 405], b4: [1987, 412],
  b5: [1862, 500], b6: [1870, 545], b7: [2095, 512], b8: [2213, 528], b9: [2092, 620], b10: [2192, 698], b11: [2310, 633], b12: [2440, 622],
  b13: [2357, 728], b14: [2398, 828], b15: [2502, 716], b16: [2697, 684], b17: [2720, 762], b18: [2658, 800], b19: [2553, 903], b20: [2723, 926],
  b21: [1517, 677], b22: [1717, 775], b23: [1953, 910], b24: [2155, 805], c1: [1316, 618], c4: [1265, 970],
  e1: [500, 385], e2: [600, 385], e3: [750, 385], e4: [888, 385], e5: [1022, 385], e6: [1096, 575], e7: [1105, 600], e8: [1096, 900], e9: [1400, 1015],
  f1: [1556, 1015], f2: [1430, 1015], f3: [1760, 1015], f4: [1788, 1015], f5: [1990, 1015], f6: [2240, 1015], f7: [2280, 1015], f8: [2535, 1015],
  g1: [2900, 728], g2: [2900, 752], g3: [2900, 795], g4: [2900, 898], g5: [2735, 1015], g6: [2845, 1015], g7: [2900, 805], g8: [1425, 1015], g9: [1500, 945], h0: [1500, 700],
};
const BEAMS = `a1-a3 a1-a2 a2-a7 a2-a6 a3-a7 a3-a5 a2-a8 a4-a6 a4-a7 a5-a8 a5-a11 a8-a10 a8-a11 a7-a11 a6-a10 a7-a9 a6-a9 a9-a13 a10-a17 a11-a17 a10-a15 a13-a15 a13-a16 a10-a16 a11-a19
a8-e1 a8-e2 a13-e3 a13-e4 a18-e5 a15-a19 a15-a20 a16-a19 a16-a21 a15-a21 a17-a18 a17-a20 a18-a19 a21-a22 a18-c1 a21-e6 e7-c4 c1-e8 c1-e9 c1-b3 a21-b21 a22-b3 a20-b3 a19-b3
a21-b1 a20-b1 a19-b1 a19-b2 b3-b2 b3-b4 b2-b4 b1-b4 b1-b5 b2-b10 b3-b6 b5-b7 b5-b8 b6-b8 b4-b9 b4-b8 b4-b24 b6-b23 b5-b21 b9-b22 b3-b22 b21-c4 b21-f1 b22-f2 b22-f3 b23-f4 b23-f5 b24-f6
b23-b13 b9-b10 b10-b11 b9-b12 b11-b12 b8-b11 b8-b13 b7-b14 b8-b12 b13-b15 b14-b15 b15-b16 b11-b19 b12-b17 b14-f8 b18-f7 b15-b20 b16-b17 b18-b19 b19-b17 b13-b16 b17-g1 b18-g2 b17-g6 b20-g7 b16-g1 b17-g4 g5-g4 c4-h0 g8-g9`.split(/\s+/);
const beamPath = (s: string) => {
  const [a, b] = s.split("-").map(k => V[k]);
  const dx = b[0] - a[0], dy = b[1] - a[1], l = Math.hypot(dx, dy);
  const w = Math.abs(dy) < Math.abs(dx) * 0.45 ? 6.5 : 8.5;
  const nx = (-dy / l) * w, ny = (dx / l) * w;
  return `M${a[0] + nx} ${a[1] + ny}L${b[0] + nx * 0.8} ${b[1] + ny * 0.8}M${a[0] - nx} ${a[1] - ny}L${b[0] - nx * 0.8} ${b[1] - ny * 0.8}`;
};
const dots: P[] = [];
for (let i = -12; i < 20; i++) for (let j = -6; j < 14; j++) {
  const x = 15 + i * 188 - j * 36, y = 40 + i * 20.5 + j * 105;
  if (x > -1407 && x < 2898 && y > 0 && y < 1010 && !(y > 280 && x > 280 && x < 2300)) dots.push([x, y]);
}
const Dome = () => (
  <Svg width="1434" height="339" viewBox="-1404 -6 4302 1017" fill="none" shapeRendering="crispEdges" strokeWidth="3">
    <path d="M412 -6L290 385M1372 -6L1120 1011M2330 -6L2160 1011M-543 -6L-800 1011M580 -6L1500 92L2900 241M1090 596L2900 796M-1407 318L0 490M-1407 907L-900 965" stroke="#fff" strokeOpacity=".32" />
    <g fill="#ddd">{dots.map(([x, y], i) => <rect key={i} x={x} y={y} width="3" height="3" />)}</g>
    <g stroke="#fff">
      <path d={BEAMS.map(beamPath).join("")} />
      <path d="M208 270L265 378M860 203Q885 250 892 385M860 203Q830 260 813 318M1100 630Q1500 670 1730 800Q1880 890 2020 1011M1860 400Q1700 700 1564 1011M1382 370L1340 640L1278 970M1450 240Q1490 300 1502 420M1866 400Q1920 370 1960 400M2230 620Q2310 520 2370 620Q2420 720 2475 880M2260 600Q2180 740 2075 1011M2747 695L2686 1011M2755 690Q2762 800 2758 925" />
      {Object.entries(V).filter(([k]) => /[ab]\d/.test(k) && k !== "b24").map(([k, [x, y]]) => <rect key={k} x={x - 6} y={y - 7} width="12" height="15" />)}
    </g>
    <g strokeWidth="4">
      <path d="M1300 518L1416 530M1386 505V520M1424 500V515" stroke="#d01010" strokeDasharray="40 14" />
      <path d="M1366 492L1350 558M1392 496H1420" stroke="#18d018" />
      <circle cx="1357" cy="525" r="16" fill="#ffee00" /><circle cx="1299" cy="518" r="9" fill="#e80000" /><circle cx="1416" cy="530" r="9" fill="#e80000" /><circle cx="1366" cy="492" r="8" fill="#00e010" /><circle cx="1350" cy="558" r="8" fill="#00e010" />
      <path d="M-995 960L-970 905M-995 960H-970" stroke="#e8e800" />
    </g>
  </Svg>
);

const WIRES: [string, number][] = [
  ["M488 572C550 572 585 576 620 590", 2.5], ["M488 572C560 572 597 590 620 640", 2.5], ["M488 572C550 572 592 600 618 680", 2.5], ["M488 572C545 572 588 605 616 708Q624 740 628 800L632 969", 2.5],
  ["M488 572C540 572 585 610 614 725Q620 760 624 793L630 969", 2.5], ["M488 641H640", 2.5], ["M628 790Q635 920 669 969", 1.6], ["M655 790C680 820 715 824 768 824", 1.4],
  ["M1300 644H1701", 1.2], ["M1460 746C1560 746 1577 725 1580 690C1582 650 1590 617 1701 617", 1.8], ["M1463 747C1490 747 1520 746 1545 735", 2.4],
  ["M928 936C1060 936 1090 925 1105 895C1125 850 1120 815 1300 815", 2.2], ["M1117 969C1130 860 1170 815 1300 815", 1.6], ["M1127 969C1145 870 1190 815 1300 815", 1.6],
  ["M1116 793C1150 808 1200 815 1300 815", 1.4], ["M1145 790C1180 808 1230 815 1300 815", 1.4], ["M1170 788C1200 806 1240 815 1300 815", 1.4],
  ["M1862 549C1900 549 1898 585 1912 606", 2.2], ["M1862 549C1890 549 1895 600 1900 660Q1904 780 1912 810", 2], ["M1862 549C1888 549 1890 620 1894 700Q1900 880 1912 969", 2], ["M1862 549C1885 549 1887 600 1893 680Q1898 800 1906 900L1912 950", 2],
  ["M1862 617C1885 617 1886 660 1890 720Q1897 900 1910 969", 2], ["M1862 631H1912", 2.2], ["M1862 631C1890 631 1892 690 1897 740Q1903 860 1912 930", 2], ["M1862 631C1894 631 1896 680 1912 740", 2], ["M1862 644C1884 644 1888 700 1891 760Q1896 900 1909 969", 2],
  ["M1857 723C1900 723 1893 690 1912 655", 2.2], ["M1857 723C1895 723 1895 770 1912 808", 2], ["M1857 723C1888 723 1888 800 1894 860Q1900 940 1908 969", 2],
];

const NODES = ["Arc", "BSplineCurve", "BSplineSurface", "BubbleChartPreview", "Camera", "Cell", "Circle", "ClipVolume", "ClipVolumeStyle", "Color", "ColorGradient", "Cone", "CoordinateSystem", "crossbar010", "crossbar10", "Curve", "DataExport"];

const Glyph = ({ k, w = 12 }: { k: "min" | "max" | "x"; w?: number }) => (
  <Svg width={w} height={w} viewBox="0 0 12 12" fill="#fff" stroke="#404858" strokeWidth=".9">
    {k === "min" && <rect x=".5" y="6" width="11" height="4" />}
    {k === "max" && <path fillRule="evenodd" d="M1 1.500h10v9H1zM4 4.500h4v3H4z" />}
    {k === "x" && <path d="M1 1.500h3L6 4l2-2.500h3L7.700 6l3.300 4.500H8L6 8l-2 2.500H1L4.300 6z" />}
  </Svg>
);
const Chrome = () => (
  <Svg width="30" height="32" viewBox="0 0 30 32"><circle cx="16" cy="16" r="13.500" fill="#fbd02c" /><path d="M4 9.500A13.500 13.500 0 0 1 28.500 11H16L11 19Z" fill="#e03c30" /><path d="M4 9.500A13.500 13.500 0 0 0 15 29.500L21 20L11 19Z" fill="#38a24a" /><circle cx="16" cy="16" r="6" fill="#fff" /><circle cx="16" cy="16" r="4.700" fill="#3c80e8" /></Svg>
);
const Orb = () => (
  <Svg width="38" height="38" viewBox="0 0 38 38"><defs><radialGradient id="orb" cx=".5" cy=".85"><stop offset="0" stopColor="#62c4ec" /><stop offset=".6" stopColor="#1d5f98" /><stop offset="1" stopColor="#4a7498" /></radialGradient></defs>
    <circle cx="19" cy="19" r="18" fill="url(#orb)" stroke="#8cb4d0" /><path d="M4 15Q19 2 34 15Q32 2 19 1Q6 2 4 15z" fill="#fff" opacity=".3" />
    <path d="M10 11q4-3 8-1l-1.500 8q-4-2-8 1z" fill="#f0622c" /><path d="M19.500 11q4 2 9-1L26 18q-4 3-8 1z" fill="#9ccc3c" /><path d="M8 20.500q4-3 8-1L14.500 27q-4-2-8 1z" fill="#4aa8e8" /><path d="M17.500 20q4 2 8.500-1l-2 8q-4 3-8 1z" fill="#fcd040" /></Svg>
);
const Folder = () => (
  <Svg width="34" height="34" viewBox="0 0 34 34"><path d="M1 4h9l2 3h18v22H1z" fill="#e8c868" stroke="#b89840" /><path d="M4 3h5v3h6v2h9v3" stroke="#3c9c50" strokeWidth="2" fill="none" /><path d="M2 10h29v20H2z" fill="#faeaa4" stroke="#c8a850" /><path d="M6 33V23q0-3 3-3h15q3 0 3 3v10h-5v-8H11v8z" fill="#8cccf0" stroke="#e8f8ff" /></Svg>
);
const Firefox = () => (
  <Svg width="32" height="34" viewBox="0 0 32 34"><circle cx="17" cy="15" r="12.500" fill="#1c4488" /><path d="M12 4q8-2 13 4q-5 0-6 4l-6-2z" fill="#5ca8e0" /><path d="M2 6q2 4 6 4q4-3 8-1q-3 2-2 4l4 1q0 3-5 4q1 5 7 4q6-1 7-7q2 3 0 6q5-6 1-15q5 6 4 13Q29 31 16 32Q2 30 1 17Q0 11 2 6z" fill="#e8681c" /><path d="M28 7q4 8 0 15q-4 7-12 7q-8 0-12-6q4 9 13 9q14-1 14-15q0-5-3-10z" fill="#fcb830" /></Svg>
);
const IE = () => (
  <Svg width="34" height="34" viewBox="0 0 34 34" fill="none"><path d="M27 23Q23 30 16 28Q9 25 10 17Q12 8 19 8Q27 9 26 18H11" stroke="#2c9ce8" strokeWidth="5.500" /><path d="M27 23Q23 30 16 28Q9 25 10 17Q12 8 19 8Q27 9 26 18H11" stroke="#7cd0fa" strokeWidth="2.200" /><path d="M5 31Q-1 24 12 11Q26-1 31 4Q32 7 29 10Q30 5 25 6Q13 12 7 23Q3 30 9 29Q7 33 5 31z" fill="#fcd44c" /></Svg>
);
const Paint = () => (
  <Svg width="34" height="34" viewBox="0 0 34 34"><path d="M11 9Q24 6 26 17Q26 28 16 31Q11 32 12 27Q12 24 8 26Q1 28 0 22Q0 12 11 9z" fill="#dbe8f4" stroke="#7c98b8" /><circle cx="6" cy="19" r="2.500" fill="#d83828" /><circle cx="10" cy="13" r="2.500" fill="#38a048" /><circle cx="16" cy="12" r="2.300" fill="#e8c020" /><circle cx="9" cy="23" r="2" fill="#3868d0" /><path d="M28 4L17 32" stroke="#c87830" strokeWidth="3" /><path d="M27 0l6 2-5 9-4-2z" fill="#f0c890" /></Svg>
);

const MENU: [string, string, string, number][] = [["", "F", "ile", 15], ["", "E", "dit", 17], ["", "S", "ettings", 37.5], ["", "T", "ools", 25.5], ["", "U", "tilities", 32], ["Wor", "k", "space", 54], ["", "W", "indow", 38], ["", "H", "elp", 21]];
const VT: [string, number, number?][] = [["attrs", 24], ["^", 13], ["display", 23, 1], ["bulb", 22], ["^", 14], ["|", 3], ["brush", 27], ["zin", 18], ["zout", 23], ["zwin", 22], ["fit", 23], ["rotate", 21, 1], ["hand", 23], ["|", 2], ["feet", 25], ["vprev", 22], ["vnext", 22], ["|", 2], ["vcopy", 27], ["persp", 20, 1], ["clip", 21, 1], ["clipv", 24]];
const Attr = ({ n, last, sw }: { n: string; last?: boolean; sw?: boolean }) => (
  <><Slot $w={34}>{sw ? <Swatch /> : n === "weights" ? (
    <Svg width="19" height="19" viewBox="0 0 19 19"><path d="M1 .5h17" stroke="#000" /><path d="M1 5h17" stroke="#000" strokeWidth="2" /><path d="M1 10h17" stroke="#000" strokeWidth="3" /><path d="M1 16.500h17" stroke="#000" strokeWidth="4" /></Svg>
  ) : <Ico n={n} />}</Slot><Slot $w={14}><Text $s={12} $f={SEG} $c={last ? "#999" : "#222"}>0</Text></Slot><Slot $w={22}><Caret $c={last ? "#777" : "#000"} $s={3.5} /></Slot>{!last && <Sep />}</>
);

export default function App() {
  return (
    <Desktop>
      <Global />
      <Frame>
        <TitleBar>
          <TitleLeft><Ico n="gc" s={16} /><Text $f={SEG} $s={12} $ls={-0.22}>Exercice2.dgn [3D - V8 DGN] - GenerativeComponents V8i (SELECTseries 3)</Text></TitleLeft>
          <WinBtns><WinBtn $w={28}><Glyph k="min" /></WinBtn><WinBtn $w={27}><Glyph k="max" /></WinBtn><WinBtn $w={47} $red><Glyph k="x" /></WinBtn></WinBtns>
        </TitleBar>
        <Client>
          <Bar $h={34}>
            <Band $w={367}><Grip $m="0 10px 0 3px" />{MENU.map(([a, u, b, w]) => <MenuItem key={u + b} $w={w}>{a}<u>{u}</u>{b}</MenuItem>)}</Band>
            <Band $w={67}><Grip $m="0 0 0 3px" /><Slot $w={33}><Ico n="undo" s={17} /></Slot><Slot $w={24}><Ico n="redo" s={17} /></Slot></Band>
            <Band $w={551}>
              <Grip $m="0 6px 0 3px" /><Slot $w={24}><Ico n="laptop" s={22} /></Slot><Slot $w={22}><Caret $s={3.5} /></Slot><Sep $m="0 5px 0 0" />
              <Select $w={128} $h={20}><Text>Default</Text><Caret $s={3.5} /></Select><Sep $m="0 0 0 3px" />
              <Attr n="" sw /><Attr n="styles" /><Attr n="weights" /><Attr n="globe" /><Attr n="tri" last />
            </Band>
            <Band $w={438}>
              <Grip $m="0 6px 0 3px" />
              {["model", "refs", "raster", "image", "layersg", "layersy", "accusnap", "acs"].map(n => <React.Fragment key={n}><Slot $w={22}><Ico n={n} s={20} /></Slot><Slot $w={20.7}><Caret $s={3.5} /></Slot></React.Fragment>)}
              {["info", "aim", "noball"].map(n => <Slot $w={28} key={n}><Ico n={n} s={20} /></Slot>)}
            </Band>
          </Bar>
          <Body>
            <Left>
              <Pane $h={321}>
                <Head t="Tasks" />
                <TaskCombo><Ico n="person" s={15} /><Text $f={VER} $s={11.5}>Tasks</Text><ComboBtn><Caret /></ComboBtn></TaskCombo>
                <WhiteRow>
                  <Slot $w={28} $h={28} $on="orange"><Ico n="arrow" s={19} /></Slot>
                  {["sort", "dimen", "book", "glasses", "stack", "sliders", "refresh"].map(n => <Slot key={n} $w={27} $h={28}><Ico n={n} s={19} />{["sort", "dimen", "glasses", "stack"].includes(n) && <Corner />}</Slot>)}
                  <Slot $w={27} $h={28}><Text $f={`"Liberation Serif",serif`} $s={18} $ls={-0.5}><b><i>f</i></b><i>()</i></Text></Slot>
                </WhiteRow>
                <Primary><Ico n="gc" s={16} /><Text $f={VER} $s={11.5} $b>Primary</Text>
                  <PrimaryTools>
                    <Svg width="13" height="13" fill="#222"><path d="M0 0h6v6H0zM7 0h6v6H7zM0 7h6v6H0zM7 7h6v6H7z" /></Svg><span />
                    <Svg width="13" height="13" fill="#222"><path d="M0 1h13v2H0zM0 5.500h13v2H0zM0 10h13v2H0z" /></Svg>
                    <Svg width="17" height="17" fill="#222"><path d="M.5 .5h16v16H.5z" fill="#fff" stroke="#aaa" /><path d="M2 2h13v6H2zM2 9.500h13v5H2z" /></Svg>
                    <Chev up c="#333" w={12} />
                  </PrimaryTools>
                </Primary>
                <Tools>
                  <ToolRow>{["newf", "point", "plane", "csys", "newdoc", "up1", "up2", "spiral", "down1"].map(n => <Slot key={n} $w={28}><Ico n={n} s={20} /></Slot>)}</ToolRow>
                  <ToolRow>{["grab", "dup", "moved", "link1", "link2", "palette", "del"].map(n => <Slot key={n} $w={28}><Ico n={n} s={20} /></Slot>)}</ToolRow>
                  <ToolRow>{["grid9", "line1", "line2", "rings", "play2", "playend", "tree"].map(n => <Slot key={n} $w={28}><Ico n={n} s={20} /></Slot>)}</ToolRow>
                </Tools>
                <Promote><Ico n="promote" s={14} /><Text $f={VER} $s={11.5} $ls={-0.05}>Promote Elements</Text><Push><Ico n="ramp" s={17} /></Push></Promote>
              </Pane>
              <Pane $h={473}>
                <Head t="New Node" ls={-0.1} />
                <FilterRow>
                  <FilterBox><Marked>Node types, techniques</Marked><Caret $s={3.5} /></FilterBox>
                  <Row $p="3px 0 0 24px" $g={4}><Check /><Text>Show general properties</Text></Row>
                </FilterRow>
                <TreeBox>
                  <TreeRows>
                    <TreeHead><Text>Node Type</Text><Svg width="6" height="9"><path d="M0 9L4 0" stroke="#555" /></Svg></TreeHead>
                    {NODES.map((n, i) => <TreeRow key={n}><RowHead>{i === 0 && <RightTri />}</RowHead><PlusCell><Plus /></PlusCell><NameCell $hot={i === 0}>{n}</NameCell></TreeRow>)}
                  </TreeRows>
                  <Scroll><div><ScBtn $h={16}><Chev up /></ScBtn><ScBtn $h={77}><Svg width="7" height="9"><path d="M0 1h7M0 3.500h7M0 6h7M0 8.500h7" stroke="#8ca8e8" /></Svg></ScBtn></div><ScBtn $h={15}><Chev /></ScBtn></Scroll>
                </TreeBox>
                <Form>
                  <Text>Type:</Text><Field /><span /><span />
                  <Text>Technique:</Text><Field /><span /><Button $w={55} $off>Example</Button>
                  <Text>Name of new node:</Text><Field $white /><span /><span />
                </Form>
                <Row $p="0 0 0 112px" $g={4} $h={20}><Check /><Text $ls={0.1}>Assign active symbology</Text></Row>
                <Row $p="4px 4px 0 4px" $j="space-between"><Button $w={78} $off $h={23}>Edit Last</Button><Button $w={78} $off $h={23}>OK</Button></Row>
                <Tabs><Tab $w={78}>Transactions</Tab><Tab $w={69} $on>New Node</Tab><Tab $w={100}>Node Properties</Tab></Tabs>
              </Pane>
              <Pane $h={102}>
                <Head t="Element Selection" ls={-0.35} />
                <Row $p="9px 0 0 23px" $g={13} $h={60}>
                  <div>
                    <Boxes>{["selind", "selbox", "selpar", "selcir", "sellin"].map((n, i) => <Slot key={n} $w={20} $h={20} $on={i ? undefined : "orange"}><Ico n={n} s={15} /></Slot>)}</Boxes>
                    <Row $h={1} />
                    <Boxes>{["selnew", "seladd", "selsub", "selinv", "selall"].map((n, i) => <Slot key={n} $w={20} $h={20} $on={i ? undefined : "orange"}><Ico n={n} s={16} /></Slot>)}</Boxes>
                  </div>
                  <div><Slot $w={28} $h={27} $on="orange"><Ico n="disable" s={19} /></Slot><Slot $w={26} $h={30}><Ico n="grayptr" s={20} /></Slot></div>
                  <Row $p="46px 0 0 0"><Caret $s={5} /></Row>
                </Row>
              </Pane>
            </Left>
            <Right>
              <ViewWin>
                <ViewTitle><Ico n="cubeb" s={15} /><Text $f={SEG} $s={12} $ls={-0.38}>View 1, Default</Text><Push /><Row $g={2}><MdiBtn><Glyph k="min" w={11} /></MdiBtn><MdiBtn><Glyph k="max" w={11} /></MdiBtn><MdiBtn $red><Glyph k="x" w={11} /></MdiBtn></Row></ViewTitle>
                <ViewTools>
                  {VT.map(([n, w, c], i) => n === "|" ? <Sep key={i} $h={21} $m={`0 0 0 ${w}px`} /> : <Slot key={i} $w={w}>{n === "^" ? <Caret $s={3.5} /> : <Ico n={n} s={15} />}{c && <CornerDown />}</Slot>)}
                </ViewTools>
                <Canvas><Dome /></Canvas>
              </ViewWin>
              <GraphPane>
                <Head t="Graph" one ls={-0.55} />
                <GraphTools>
                  <Grip $m="0 2px 0 2px" /><Slot $w={22} $h={22} $on="blue"><Ico n="arrow" s={13} /></Slot><Sep $h={18} $m="0 0 0 2px" />
                  <Slot $w={23}><Ico n="zin" s={15} /></Slot><Slot $w={22}><Ico n="zout" s={15} /></Slot><Slot $w={25}><Ico n="zwin" s={15} /></Slot><Slot $w={20}><Ico n="orbit" s={15} /></Slot><Sep $h={18} $m="0 0 0 2px" /><Slot $w={25}><Ico n="chart" s={14} /></Slot>
                  <GraphEnd><Caret $c="#fff" $s={3} /></GraphEnd>
                </GraphTools>
                <GraphArea>
                  <Wires width="1443" height="448" viewBox="468 521 1443 448" fill="none" stroke="#fff">{WIRES.map(([d, w], i) => <path key={i} d={d} strokeWidth={w} />)}</Wires>
                  <NodeBox $x={328} $y={559} $h={101}><NodeTitle>&nbsp;</NodeTitle><NodeKind>&nbsp;</NodeKind><NodeSelect><span /><Caret $s={3.5} /></NodeSelect><ChevRow><span /><Down /></ChevRow><Ports><div /><div>ion</div></Ports></NodeBox>
                  <Dot $x={487.5} $y={572} $r={4} /><Dot $x={487.5} $y={641} />
                  <NodeBox $x={768} $y={758} $h={125}><ChevRow $m={40}><Down /><Down /></ChevRow><Ports><div>CoordinateSy...<br />XTranslation<br />YTranslation<br />ZTranslation</div></Ports></NodeBox>
                  {[824, 837, 850.5, 864].map(y => <Dot key={y} $x={768} $y={y} />)}
                  <NodeBox $x={768} $y={923} $h={120}><NodeTitle>point03</NodeTitle><NodeKind>Point</NodeKind><NodeSelect>ByCartesianCoordinates<Caret $s={3.5} /></NodeSelect></NodeBox>
                  <Dot $x={928} $y={936} $r={4} />
                  <NodeBox $x={1300} $y={733} $h={101}><NodeTitle>bsplineCurve01</NodeTitle><NodeKind>BSplineCurve</NodeKind><NodeSelect>ByPoles<Caret $s={3.5} /></NodeSelect><ChevRow><Down /><Down /></ChevRow><Ports><div>Poles</div></Ports></NodeBox>
                  <Dot $x={1460} $y={746} $r={4} /><Dot $x={1300} $y={815} />
                  <NodeBox $x={1700.5} $y={535} $h={128} $dim><NodeTitle $dim>coordinateSystem01</NodeTitle><NodeKind $dim>CoordinateSystem</NodeKind><NodeSelect $dim>ByParameterAlongCurve<Caret $c="#333" $s={3.5} /></NodeSelect><ChevRow><DimDown /><DimDown /></ChevRow><Ports $dim><div>Curve<br />T<br />UpVector</div><div>Z<br />YDirection<br />ZDirection</div></Ports></NodeBox>
                  <Dot $x={1861} $y={549} $r={4} $dim />
                  {[617, 631, 644].map(y => <React.Fragment key={y}><Dot $dim $x={1701} $y={y} $r={3} /><Dot $dim $x={1861} $y={y} $r={3} /></React.Fragment>)}
                  <Badge><Svg width="17" height="17" viewBox="0 0 20 20" fill="#999"><path d="M1 1h5v5H1zM8 1h5v5H8zM1 8h5v5H1zM15 8h5v5h-5zM8 15h5v5H8zM15 15h5v5h-5z" /><path d="M15 1h5v5h-5zM8 8h5v5H8zM1 15h5v5H1z" fill="#c8d048" stroke="#888c40" /></Svg></Badge>
                  <NodeBox $x={1696} $y={710} $h={97}><NodeTitle>slider01</NodeTitle>
                    <SliderBox><Svg width="150" height="27" fill="none"><path d="M9 10.500h133" stroke="#888" strokeWidth="1.500" /><path d="M8.500 21v4M22.500 21v4M35.500 21v4M48.500 21v4M62.500 21v4M75.500 21v4M89.500 21v4M102.500 21v4M116.500 21v4M129.500 21v4M142.500 21v4" stroke="#aaa" /><path d="M70.500 2.500h9v13l-4.500 4.500l-4.500-4.500z" fill="#eee" stroke="#777" /></Svg></SliderBox>
                    <Value>5.04</Value><ChevRow $m={-3}><Down /><Down /></ChevRow></NodeBox>
                  <Dot $x={1856} $y={723} $r={4} />
                </GraphArea>
              </GraphPane>
            </Right>
          </Body>
          <Status>
            <Text $ls={-0.19}>Element Selection &gt; Identify element to add to set</Text><Push /><Row $p="0 1035px 0 0"><Grip $m="0 3px 0 0" /><Sep $h={25} $m="0 2px 0 0" /><Cell $w={26} /></Row>
            <Sep $h={25} $m="0 1px 0 -6px" />
            <Cell $w={26}><Ico n="path" s={13} /></Cell><Cell $w={26}><Ico n="lock" s={12} /></Cell><Cell $w={114} $left><Text $ls={-0.15}>Default</Text></Cell><Cell $w={103} />
            <Cell $w={26} /><Cell $w={26} /><Cell $w={26} /><Cell $w={26}><Ico n="scroll" s={13} /></Cell><Cell $w={26} /><Cell $w={26}><Ico n="cube" s={13} /></Cell>
          </Status>
          <Bar $h={34}>
            <Band $w={204}><Grip $m="0 5px 0 2px" /><Select $w={160}><Text $ls={-0.1}>::User.Objects.baseCS.XYPlar</Text><Caret $s={3.5} /></Select><Slot $w={32}><Ico n="mesh" s={20} /></Slot></Band>
            <Band $w={420}>
              <Grip $m="0 5px 0 1px" /><Slot $w={25}><Ico n="back" s={19} /></Slot><Slot $w={19}><Caret $s={3.5} /></Slot><Slot $w={25}><Ico n="fwd" s={19} /></Slot><Slot $w={18}><Caret $c="#777" $s={3.5} /></Slot><Slot $w={24}><Ico n="compass" s={20} /></Slot><Slot $w={18}><Caret $s={3.5} /></Slot>
              <Select $w={128}><Row $g={5}><Ico n="cascade" s={16} /><Text>Axon</Text></Row><Caret $s={3.5} /></Select><Sep $m="0 0 0 3px" /><Slot $w={33}><Ico n="cascade" s={20} /></Slot><Sep $m="0 2px 0 0" />
              {"12345678".split("").map((n, i) => <Num key={n} $on={!i}>{n}</Num>)}
            </Band>
          </Bar>
        </Client>
      </Frame>
      <Taskbar>
        <TaskBtn $w={54}><Orb /></TaskBtn><TaskBtn $w={68}><Chrome /></TaskBtn><TaskBtn $w={54} $on={0.55}><Folder /></TaskBtn><TaskBtn $w={74}><Firefox /></TaskBtn><TaskBtn $w={50}><IE /></TaskBtn>
        <Row $p="0 0 0 7px" $g={4}><TaskBtn $w={59} $on={0.85}><Ico n="gc" s={30} /></TaskBtn><TaskBtn $w={59} $on={0.3}><Paint /></TaskBtn></Row>
        <Tray>
          <Slot $w={26}><Svg width="8" height="5"><path d="M4 0l4 5H0z" fill="#fff" /></Svg></Slot>
          <Slot $w={28}><Svg width="16" height="16" viewBox="0 0 16 16"><path d="M1 5h3l4-4v13l-4-4H1z" fill="#fff" /><circle cx="11" cy="11" r="4.500" fill="#d82020" stroke="#fff" strokeWidth=".8" /><path d="M8.500 8.500l5 5" stroke="#fff" strokeWidth="1.500" /></Svg></Slot>
          <Slot $w={22}><Svg width="16" height="16" viewBox="0 0 16 16"><path d="M2 1v14" stroke="#fff" strokeWidth="1.600" /><path d="M3 2h6l1 2h5l-2 3 1 2H9V8H3z" fill="#fff" /></Svg></Slot>
          <Slot $w={26}><Svg width="16" height="16" viewBox="0 0 16 16" fill="none" stroke="#fff" strokeWidth="1.400"><path d="M5 4h10v8H5zM7 15h7M2 1v3M5 1v3M1 4h5v3H1zM3.500 7v7h3" /></Svg></Slot>
          <Clock>11:20<br />08/11/2012</Clock><ShowDesk />
        </Tray>
      </Taskbar>

      <Dialog>
        <DTitle><Text $f={SEG} $s={12} $ls={-0.27}>Manage Loaded Assemblies</Text><DClose><Glyph k="x" w={9} /></DClose></DTitle>
        <DBody>
          <Group $h={184} $mb={24}><legend>Load Assembly</legend>
            <Row $h={12} />
            <Pick><Button $w={222} $focus $ls={0.06}>Select Source Code File (*.cs;*.vb)</Button><Well /></Pick>
            <Or>- OR -</Or>
            <Pick><Button $w={222} $ls={0.14}>Select Pre-compiled Assembly File (*.dll)</Button><Well /></Pick>
            <Row $p="14px 0 0 85px"><Button $w={76} $h={23} $off $b $ls={0.5}>Load It!</Button></Row>
          </Group>
          <Group $h={250} $mb={11}><legend>Assemblies Loaded</legend>
            <Row $p="6px 0 0 9px" $h={22}><Text $ls={0.085}>Once an assembly is loaded, it stays loaded until you exit from GenerativeComponents.</Text></Row>
            <Grid>
              <GRow $head><RowHead $w={17} /><GCell $head $w={264}>Assembly File</GCell><GCell $head $c $w={168} $ls={0.07}>Stored in Current Design File</GCell><GCell $head $c $w={168} $ls={0.07}>Stored in Your GC Environment</GCell></GRow>
              {["User.crossbar10.dll", "User.dia1.dll", "User.crossbar010.dll"].map((n, i) => (
                <GRow key={n}><RowHead $w={17}>{i === 0 && <RightTri />}</RowHead><GCell $w={264} $alt={i > 0} $ls={0.15}>{n}</GCell><GCell $w={168} $c><GCheck /></GCell>
                  <GCell $w={168} $c><GCheck><Svg width="9" height="9"><path d="M1 4l2.500 3L8 1" stroke="#21a121" strokeWidth="2" fill="none" /></Svg></GCheck></GCell></GRow>
              ))}
            </Grid>
          </Group>
          <Row $j="flex-end"><Button $w={72} $h={23}>Close</Button></Row>
        </DBody>
      </Dialog>
      <Tip>Fechar</Tip>
    </Desktop>
  );
}
